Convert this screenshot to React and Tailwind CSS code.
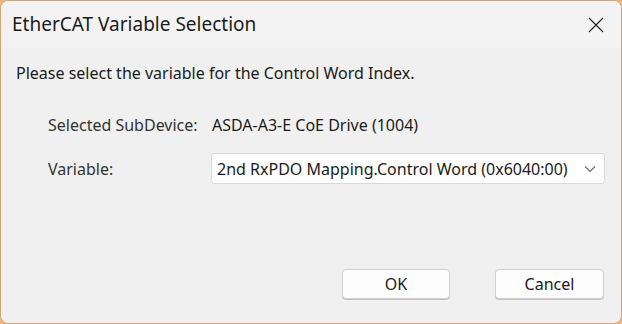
export default function App() {
  return (
    <div className="w-[622px] h-[324px] bg-[#f2b47a] overflow-hidden" style={{ fontFamily: '"Segoe UI", "Noto Sans", "Liberation Sans", sans-serif' }}>
      <div className="w-full h-full rounded-lg border border-[#d4a574] bg-[#f0f0f0] flex flex-col text-[#1b1b1b]">
        {/* title bar */}
        <div className="h-[47px] bg-[#f3f3f3] rounded-t-lg flex items-center justify-between pl-[11px] pr-[17px]">
          <span className="text-[19px] leading-6 mt-[-1px]">EtherCAT Variable Selection</span>
          <svg width="16" height="16" viewBox="0 0 16 16">
            <path d="M1 1 L15 15 M15 1 L1 15" stroke="#1b1b1b" strokeWidth="1.1" fill="none" />
          </svg>
        </div>

        <div className="flex-1 flex flex-col pl-[15px] pr-[15px] pt-[15px] text-[16px]">
          <p className="leading-5">Please select the variable for the Control Word Index.</p>

          <div className="pl-8 mt-[30px] h-6 flex items-center">
            <span className="w-[164px] text-[#333]">Selected SubDevice:</span>
            <span>ASDA-A3-E CoE Drive (1004)</span>
          </div>

          <div className="pl-8 mt-[16px] flex items-center">
            <span className="w-[163px] text-[#333]">Variable:</span>
            <div className="w-[394px] h-[31px] bg-white border border-[#d9d9d9] rounded-[3px] flex items-center justify-between pl-[5px] pr-[8px]">
              <span>2nd RxPDO Mapping.Control Word (0x6040:00)</span>
              <svg width="12" height="8" viewBox="0 0 12 8">
                <path d="M1 1.5 L6 6.5 L11 1.5" stroke="#666" strokeWidth="1.1" fill="none" />
              </svg>
            </div>
          </div>

          <div className="mt-auto mb-[24px] flex justify-end gap-[45px] pr-[2px]">
            <button className="w-[108px] h-[30px] bg-[#fdfdfd] border border-[#d0d0d0] rounded-[4px] shadow-[0_1px_0_#c4c4c4]">OK</button>
            <button className="w-[109px] h-[30px] bg-[#fdfdfd] border border-[#d0d0d0] rounded-[4px] shadow-[0_1px_0_#c4c4c4]">Cancel</button>
          </div>
        </div>
      </div>
    </div>
  );
}
